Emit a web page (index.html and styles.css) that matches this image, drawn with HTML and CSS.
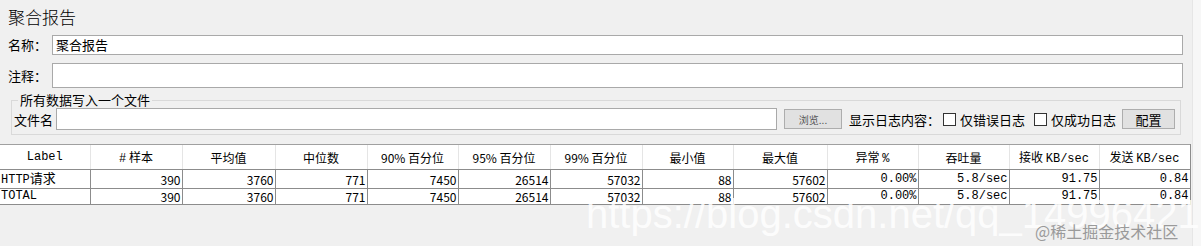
FILE: index.html
```html
<!DOCTYPE html>
<html lang="zh-CN">
<head>
    <meta charset="UTF-8">
    <title>聚合报告</title>
    <link rel="stylesheet" href="styles.css">
</head>
<body>
    <div class="window">
        <div class="panel">
            <div class="title">聚合报告</div>

            <div class="field-row name-row">
                <span class="field-label">名称：</span>
                <div class="text-input">聚合报告</div>
            </div>
            <div class="field-row comment-row">
                <span class="field-label">注释：</span>
                <div class="text-input tall"></div>
            </div>

            <fieldset class="group">
                <legend>所有数据写入一个文件</legend>
                <div class="file-row">
                    <span class="file-label">文件名</span>
                    <div class="text-input file-input"></div>
                    <button class="btn browse">浏览...</button>
                    <span class="log-label">显示日志内容：</span>
                    <span class="check"></span>
                    <span class="check-text">仅错误日志</span>
                    <span class="check second"></span>
                    <span class="check-text">仅成功日志</span>
                    <button class="btn config">配置</button>
                </div>
            </fieldset>

            <table class="report">
                <colgroup>
                    <col style="width:90px"><col style="width:92px"><col style="width:93px"><col style="width:92px">
                    <col style="width:91px"><col style="width:92px"><col style="width:92px"><col style="width:91px">
                    <col style="width:94px"><col style="width:91px"><col style="width:91px"><col style="width:90px">
                    <col style="width:91px">
                </colgroup>
                <thead>
                    <tr>
                        <th class="mono">Label</th>
                        <th><span class="mono">#</span> 样本</th>
                        <th>平均值</th>
                        <th>中位数</th>
                        <th>90% 百分位</th>
                        <th>95% 百分位</th>
                        <th>99% 百分位</th>
                        <th>最小值</th>
                        <th>最大值</th>
                        <th>异常 <span class="mono">%</span></th>
                        <th>吞吐量</th>
                        <th>接收 <span class="mono">KB/sec</span></th>
                        <th>发送 <span class="mono">KB/sec</span></th>
                    </tr>
                </thead>
                <tbody>
                    <tr>
                        <td class="label mono">HTTP<span class="cjk">请求</span></td>
                        <td>390</td><td>3760</td><td>771</td><td>7450</td><td>26514</td><td>57032</td>
                        <td>88</td><td>57602</td>
                        <td class="mono">0.00%</td><td class="mono">5.8/sec</td><td class="mono">91.75</td><td class="mono">0.84</td>
                    </tr>
                    <tr>
                        <td class="label mono">TOTAL</td>
                        <td>390</td><td>3760</td><td>771</td><td>7450</td><td>26514</td><td>57032</td>
                        <td>88</td><td>57602</td>
                        <td class="mono">0.00%</td><td class="mono">5.8/sec</td><td class="mono">91.75</td><td class="mono">0.84</td>
                    </tr>
                </tbody>
            </table>

            <div class="watermark">https://blog.csdn.net/qq_14996421</div>
            <div class="credit">@稀土掘金技术社区</div>
        </div>
        <div class="side-strip"></div>
    </div>
</body>
</html>
```

FILE: styles.css
```css
body {
    margin: 0;
    background: #f0f0f0;
    font-family: "Noto Sans CJK SC", "Noto Sans", sans-serif;
    font-size: 13px;
    color: #000;
}
.window {
    display: flex;
    width: 1201px;
    height: 246px;
    overflow: hidden;
}
.panel {
    position: relative;
    width: 1192px;
    flex: none;
}
.side-strip {
    flex: 1;
    background: #f7f7f7;
    border-left: 1px solid #e6e6e6;
}
.title {
    padding: 6px 0 0 8px;
    font-size: 17px;
    font-weight: 300;
    line-height: 22px;
}
.field-row {
    display: flex;
    align-items: center;
    padding-left: 8px;
    margin-right: 9px;
}
.name-row { margin-top: 7px; }
.comment-row { margin-top: 8px; }
.field-label {
    width: 44px;
    line-height: 16px;
}
.text-input {
    flex: 1;
    height: 18px;
    background: #fff;
    border: 1px solid #a9a9a9;
    line-height: 18px;
    padding-left: 3px;
    box-sizing: content-box;
}
.text-input.tall { height: 23px; }
.group {
    margin: 5px 11px 0 11px;
    padding: 0 5px 3px 2px;
    border: 1px solid #d9d9d9;
    min-width: 0;
}
.group legend {
    padding: 0 2px;
    margin-left: 4px;
    line-height: 14px;
    font-size: 13px;
}
.file-row {
    display: flex;
    align-items: center;
    height: 24px;
}
.file-label {
    width: 42px;
    flex: none;
}
.file-input {
    height: 20px;
    padding-left: 0;
}
.btn {
    flex: none;
    height: 20px;
    padding: 0;
    background: #e1e1e1;
    border: 1px solid #adadad;
    font-family: inherit;
    color: #000;
}
.browse {
    width: 58px;
    margin-left: 7px;
    font-size: 10px;
    color: #555;
}
.config {
    width: 53px;
    margin-left: 6px;
    font-size: 13px;
}
.log-label {
    width: 94px;
    margin-left: 7px;
    flex: none;
}
.check {
    width: 11px;
    height: 11px;
    border: 1px solid #333;
    background: #fff;
    flex: none;
}
.check.second { margin-left: 9px; }
.check-text {
    width: 65px;
    margin-left: 4px;
    flex: none;
}
.report {
    margin-top: 9px;
    width: 1190px;
    table-layout: fixed;
    border-collapse: collapse;
    background: #fff;
    font-size: 12px;
}
.report th {
    height: 24px;
    padding: 0;
    font-weight: normal;
    border-left: 1px solid #e5e5e5;
    border-top: 1px solid #a0a0a0;
    border-bottom: 1px solid #8c8c8c;
    text-align: center;
    white-space: nowrap;
}
.report th:first-child { border-left: none; }
.report th:last-child { border-right: 1px solid #8c8c8c; }
.report td {
    height: 15px;
    padding: 0 1px 0 0;
    border: 1px solid #8c8c8c;
    text-align: right;
    line-height: 15px;
    white-space: nowrap;
}
.report td:first-child { border-left: none; }
.report td.label {
    text-align: left;
    padding-left: 1px;
}
.mono {
    font-family: "Liberation Mono", "Noto Sans CJK SC", monospace;
}
.cjk {
    font-family: "Noto Sans CJK SC", sans-serif;
    font-size: 13px;
}
.watermark {
    position: absolute;
    left: 586px;
    top: 190px;
    font-family: "Liberation Sans", Arial, sans-serif;
    font-size: 40px;
    line-height: 48px;
    color: rgba(255, 255, 255, 0.85);
    white-space: nowrap;
    pointer-events: none;
}
.credit {
    position: absolute;
    left: 1035px;
    top: 220px;
    font-size: 16px;
    line-height: 22px;
    color: #9a9a9a;
    white-space: nowrap;
}
```
